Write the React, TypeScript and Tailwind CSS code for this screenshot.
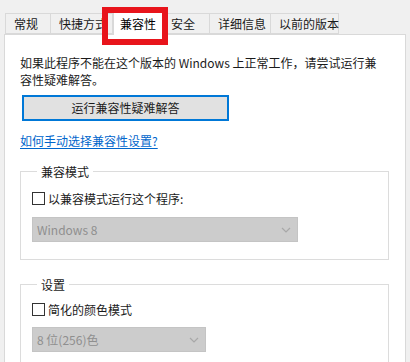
import React from "react";

const font = { fontFamily: '"Noto Sans CJK SC", "Noto Sans", sans-serif' };

function Tab({ label, w, active }: { label: string; w: string; active?: boolean }) {
  if (active) {
    return (
      <div
        className={`${w} h-[25px] -mt-[3px] -mb-[1px] bg-white border border-[#d9d9d9] border-b-0 flex items-center justify-center relative z-10`}
      >
        <span className="text-[12px] text-black leading-[17px]">{label}</span>
      </div>
    );
  }
  return (
    <div className={`${w} h-[21px] bg-[#f0f0f0] border border-[#d9d9d9] border-l-0 first:border-l flex items-center pl-[8px]`}>
      <span className="text-[12px] text-[#1a1a1a] leading-[17px] whitespace-nowrap">{label}</span>
    </div>
  );
}

function Check({ label }: { label: string }) {
  return (
    <div className="flex items-center gap-[3px]">
      <div className="w-[13px] h-[13px] border border-[#333] bg-white" />
      <span className="text-[12px] leading-[17px] text-[#1a1a1a]">{label}</span>
    </div>
  );
}

function Select({ value, w }: { value: string; w: string }) {
  return (
    <div className={`${w} h-[25px] bg-[#cccccc] border border-[#c4c4c4] flex items-center justify-between pl-[4px] pr-[6px]`}>
      <span className="text-[12px] text-[#8f8f8f] leading-[17px]">{value}</span>
      <svg width="10" height="6" viewBox="0 0 10 6">
        <path d="M1 1 L5 5 L9 1" fill="none" stroke="#a8a8a8" strokeWidth="1.2" />
      </svg>
    </div>
  );
}

export default function App() {
  return (
    <div className="w-[410px] h-[362px] bg-[#f0f0f0] overflow-hidden relative" style={font}>
      <div className="flex pt-[13px] pl-[5px] items-end relative z-10">
        <Tab label="常规" w="w-[46px]" />
        <Tab label="快捷方式" w="w-[62px]" />
        <Tab label="兼容性" w="w-[50px]" active />
        <Tab label="安全" w="w-[47px]" />
        <Tab label="详细信息" w="w-[61px]" />
        <Tab label="以前的版本" w="w-[68px]" />
      </div>
      <div className="ml-[4px] w-[402px] h-[330px] bg-white border border-[#d9d9d9] pl-[15px] pr-[10px] pt-[19px]">
        <p className="text-[12px] leading-[17px] text-[#1a1a1a]">
          如果此程序不能在这个版本的 Windows 上正常工作，请尝试运行兼
          <br />
          容性疑难解答。
        </p>
        <button className="mt-[7px] ml-[2px] w-[207px] h-[26px] bg-[#e1e1e1] border-2 border-[#0078d7] text-[12px] text-[#1a1a1a] flex items-center justify-center">
          运行兼容性疑难解答
        </button>
        <div className="mt-[6px]">
          <span className="text-[12px] leading-[17px] text-[#0066cc] underline underline-offset-2">
            如何手动选择兼容性设置?
          </span>
        </div>
        <fieldset className="mt-[12px] w-[369px] h-[97px] border border-[#dcdcdc] pl-[11px] pt-[10px]">
          <legend className="ml-[5px] px-[4px] text-[12px] leading-[17px] text-[#1a1a1a]">兼容模式</legend>
          <Check label="以兼容模式运行这个程序:" />
          <div className="mt-[10px]">
            <Select value="Windows 8" w="w-[266px]" />
          </div>
        </fieldset>
        <fieldset className="mt-[16px] w-[369px] h-[100px] border border-[#dcdcdc] pl-[11px] pt-[8px]">
          <legend className="ml-[5px] px-[4px] text-[12px] leading-[17px] text-[#1a1a1a]">设置</legend>
          <Check label="简化的颜色模式" />
          <div className="mt-[9px]">
            <Select value="8 位(256)色" w="w-[174px]" />
          </div>
        </fieldset>
      </div>
      <div className="absolute left-[102px] top-[7px] w-[66px] h-[38px] border-[6px] border-[#e8141b] z-20 pointer-events-none" />
    </div>
  );
}
